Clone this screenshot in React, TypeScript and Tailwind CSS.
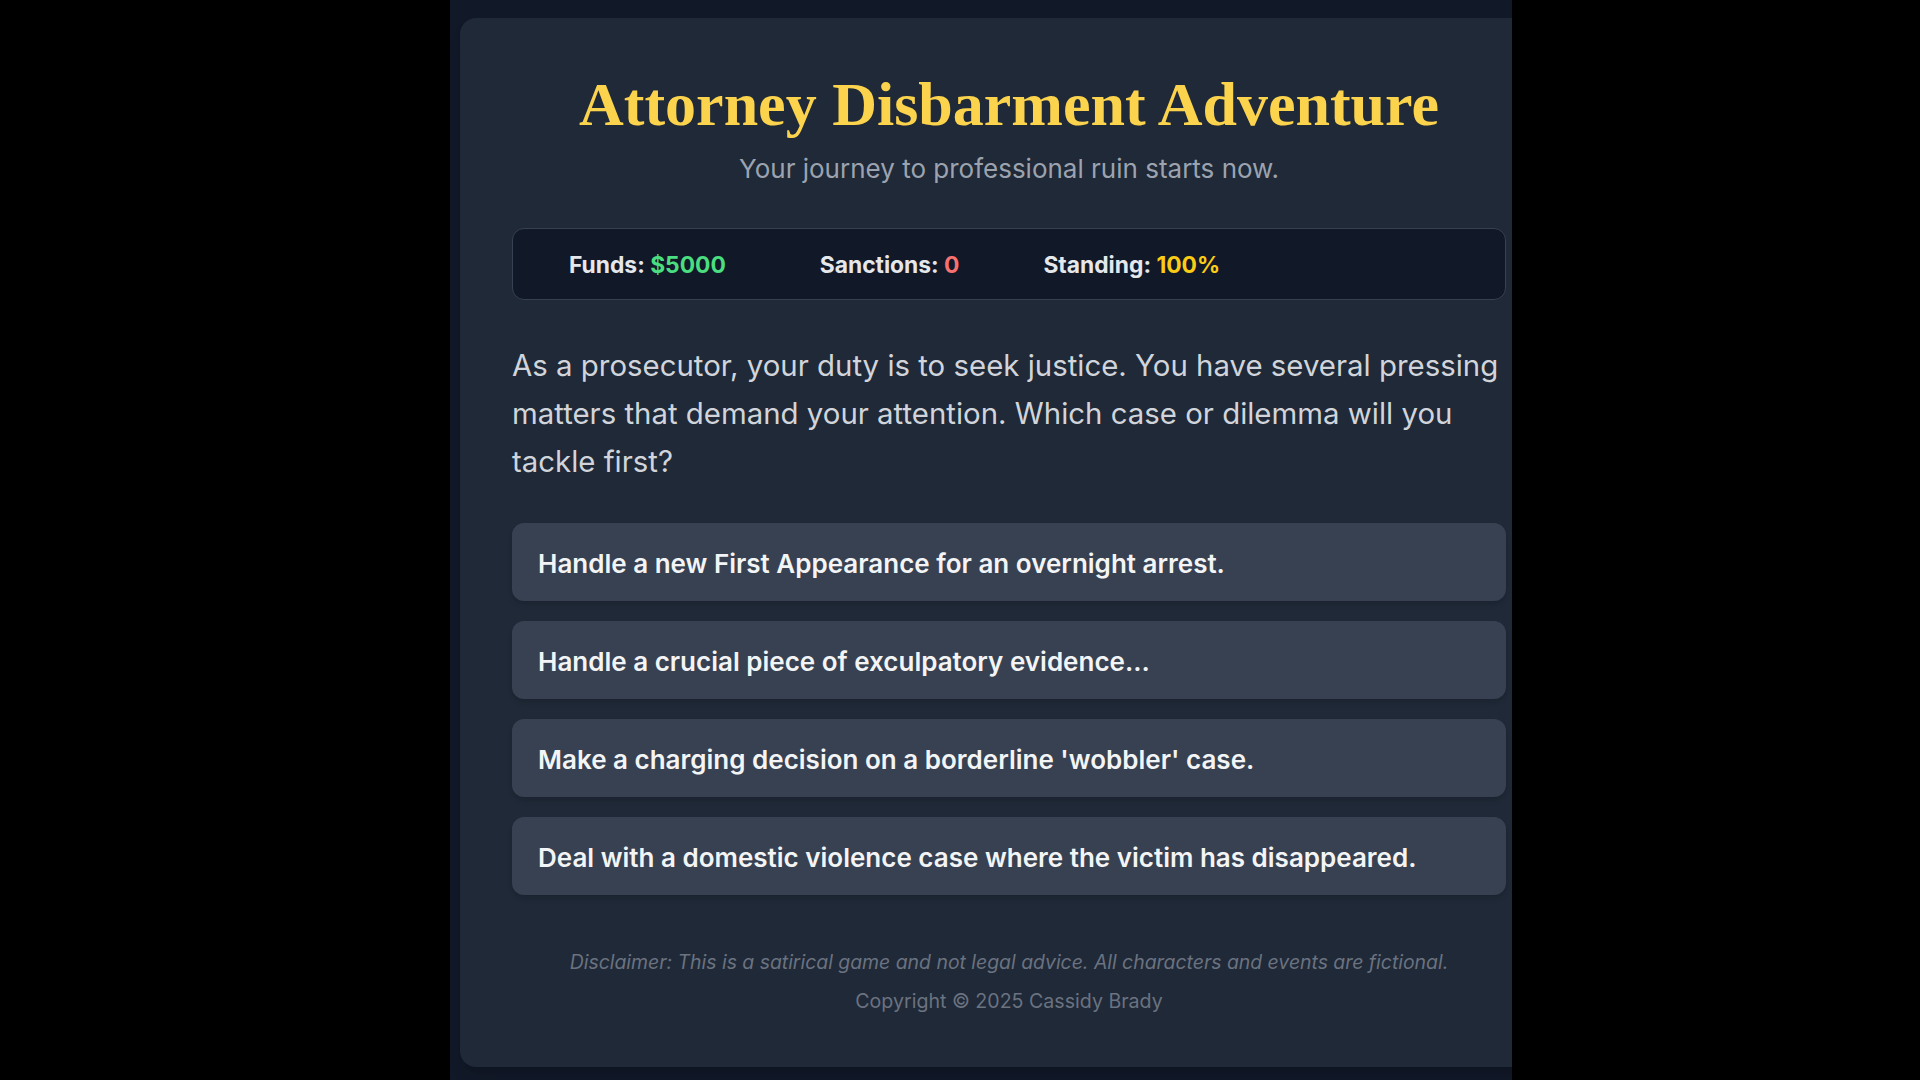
const choices = [
  "Handle a new First Appearance for an overnight arrest.",
  "Handle a crucial piece of exculpatory evidence...",
  "Make a charging decision on a borderline 'wobbler' case.",
  "Deal with a domestic violence case where the victim has disappeared.",
];

function Stat({ label, value, tone, className = "" }: { label: string; value: string; tone: string; className?: string }) {
  return (
    <span className={`font-bold text-[#e5e7eb] ${className}`}>
      {label}: <span className={tone}>{value}</span>
    </span>
  );
}

export default function App() {
  return (
    <div className="flex min-h-screen bg-black font-['Inter','Noto_Sans',sans-serif]">
      {/* game viewport */}
      <div className="ml-[450px] h-[1080px] w-[1062px] overflow-hidden bg-[#111827] pl-[10px] pt-[18px]">
        <main className="w-[1098px] rounded-2xl bg-[#1f2937] px-[52px] pb-[52px] pt-[50px] shadow-lg">
          <header className="text-center">
            <h1 className="font-['Liberation_Serif','Times_New_Roman',serif] text-[62px] font-bold leading-[72px] text-[#fcd34d]">
              Attorney Disbarment Adventure
            </h1>
            <p className="mt-[13px] text-[26px] leading-[32px] text-[#9ca3af]">
              Your journey to professional ruin starts now.
            </p>
          </header>

          {/* status bar */}
          <div className="mt-[43px] flex h-[72px] items-center rounded-xl border border-[#374151] bg-[#111827] pl-[56px] pt-[2px] text-[22.8px]">
            <Stat label="Funds" value="$5000" tone="text-[#4ade80]" />
            <Stat label="Sanctions" value="0" tone="text-[#f87171]" className="ml-[94px]" />
            <Stat label="Standing" value="100%" tone="text-[#facc15]" className="ml-[84px]" />
          </div>

          <p className="mt-[42px] text-[29.4px] leading-[48px] text-[#d1d5db]">
            As a prosecutor, your duty is to seek justice. You have several pressing matters that demand your
            attention. Which case or dilemma will you tackle first?
          </p>

          <div className="mt-[37px] flex flex-col gap-[20px]">
            {choices.map((c) => (
              <button
                key={c}
                className="flex h-[78px] items-center rounded-xl bg-[#374151] px-[26px] pt-[3px] text-left text-[26px] font-semibold text-[#f3f4f6] shadow-md"
              >
                {c}
              </button>
            ))}
          </div>

          <footer className="mt-[53px] text-center text-[#6b7280]">
            <p className="text-[19.4px] italic leading-[28px]">
              Disclaimer: This is a satirical game and not legal advice. All characters and events are fictional.
            </p>
            <p className="mt-[11px] text-[19.6px] leading-[28px]">Copyright © 2025 Cassidy Brady</p>
          </footer>
        </main>
      </div>
    </div>
  );
}
